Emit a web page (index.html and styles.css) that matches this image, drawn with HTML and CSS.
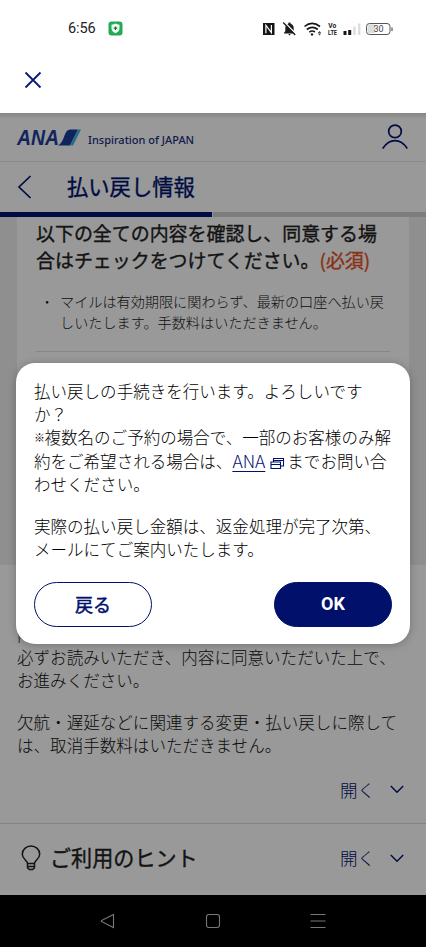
FILE: index.html
```html
<!DOCTYPE html>
<html lang="ja">
<head>
<meta charset="utf-8">
<meta name="viewport" content="width=device-width, initial-scale=1">
<title>払い戻し情報</title>
<link rel="stylesheet" href="styles.css">
</head>
<body>
<div class="phone">
  <div class="status">
    <span class="clock">6:56</span>
    <svg class="shield" width="15" height="15" viewBox="0 0 15 15"><rect x=".5" y=".5" width="14" height="14" rx="3" fill="#27a858"/><path d="M7.500 2.500Q9 3.600 11.500 3.700V7.200Q11.500 10.500 7.500 12.300Q3.500 10.500 3.500 7.200V3.700Q6 3.600 7.500 2.500Z" fill="#e8fff0"/><path d="M7.500 5.500V9M5.800 7.200H9.200" stroke="#17663a" stroke-width="1.200"/></svg>
    <svg class="sysicons" width="134" height="16" viewBox="0 0 134 16">
      <rect x="1" y="2" width="11.500" height="12" fill="#151515"/>
      <path d="M3.900 12.200V4.200L9.400 11.600V3.900" fill="none" stroke="#fff" stroke-width="1.200"/>
      <path d="M27.500 1.500c.8 0 1.200.5 1.200 1.200 2.200.7 3 2.400 3 4.500v3l1.300 1.600v.7H22v-.7l1.300-1.600v-3c0-2.100.8-3.800 3-4.500 0-.7.4-1.200 1.200-1.200ZM26.200 13h2.600l-1.300 1.400Z" fill="#1c1c1c"/>
      <path d="M22.500 1.200l12 12.300" stroke="#fff" stroke-width="1.400"/><path d="M21.200 1.500l12 12.500" stroke="#1c1c1c" stroke-width="1.300"/>
      <path d="M42.500 5.500q7.500-6.200 15.500 0M44.800 8.500q5.500-4.200 11 0M47.300 11.200q3-2.200 5.600-.2" fill="none" stroke="#161616" stroke-width="1.600"/>
      <circle cx="50" cy="13.400" r="1.200" fill="#161616"/><path d="M57.500 10l1.700 2h-3.400ZM57.500 14.500l1.700-2h-3.400Z" fill="#444"/>
      <text x="66.300" y="7" class="volte" textLength="8" lengthAdjust="spacingAndGlyphs">Vo</text><text x="66" y="14" class="volte" textLength="9" lengthAdjust="spacingAndGlyphs">LTE</text>
      <path d="M81.500 10h3v4h-3ZM86.200 9h3v5h-3Z" fill="#161616"/><path d="M91.200 5.500h2.400V14h-2.400ZM96 2.500h2.400V14H96Z" fill="#ddd"/>
      <rect x="105.500" y="3.300" width="8" height="9" rx="2" fill="#ddd"/><rect x="104.500" y="2.500" width="23.500" height="11" rx="3" fill="none" stroke="#555"/><path d="M130 6.500v3.500" stroke="#555" stroke-width="1.200"/>
      <text x="111.500" y="11.200" class="battery">30</text>
    </svg>
  </div>
  <div class="tabbar"><svg width="18" height="18" viewBox="0 0 18 18"><path d="M1.500 1.500l15 15M16.500 1.500l-15 15" stroke="#061b78" stroke-width="1.800"/></svg></div>
  <main class="page">
    <header class="brand">
      <svg class="logo" width="66" height="22" viewBox="0 -2 66 22">
        <text x="1" y="16.300" class="logotext" textLength="42" lengthAdjust="spacingAndGlyphs">ANA</text>
        <path d="M42 16.500q4-2 6.500-10Q50.500 .5 54 .5H62L54 16.500Z" fill="#1c3c9c"/><path d="M62 .5h3L57 16.500H54Z" fill="#3bb4e8"/>
      </svg>
      <span class="slogan">Inspiration of JAPAN</span>
      <svg class="user" width="28" height="28" viewBox="0 0 28 28"><g fill="none" stroke="#00146e" stroke-width="1.700"><circle cx="14" cy="8.400" r="6.300"/><path d="M1.700 25.500Q7 17.700 14 17.700T26.300 25.500"/></g></svg>
    </header>
    <div class="titlebar">
      <svg width="15" height="24" viewBox="0 0 15 24"><path d="M13.500 1L2 12l11.500 11" fill="none" stroke="#00146e" stroke-width="1.700"/></svg>
      <h1>払い戻し情報</h1>
    </div>
    <div class="progress"><i></i></div>
    <section class="grey">
      <div class="card">
        <h2>以下の全ての内容を確認し、同意する場<br>合はチェックをつけてください。<b>(必須)</b></h2>
        <div class="note"><span>・</span><p>マイルは有効期限に関わらず、最新の口座へ払い戻<br>しいたします。手数料はいただきません。</p></div>
        <hr>
      </div>
    </section>
    <section class="terms">
      <p>内<br>必ずお読みいただき、内容に同意いただいた上で、<br>お進みください。</p>
      <p>欠航・遅延などに関連する変更・払い戻しに際して<br>は、取消手数料はいただきません。</p>
      <div class="open"><span>開く</span><svg width="14" height="9" viewBox="0 0 14 9"><path d="M.8 1L7 7.300 13.200 1" fill="none" stroke="#00146e" stroke-width="1.400"/></svg></div>
    </section>
    <section class="hint">
      <svg class="bulb" width="20" height="26" viewBox="0 0 20 26"><g fill="none" stroke="#222" stroke-width="1.500"><path d="M6.500 18.500C6.500 15.500 1.300 14 1.300 9.200a8.700 8.200 0 0 1 17.400 0C18.700 14 13.500 15.500 13.500 18.500ZM6.500 18.500v4.200L8.300 24.500h3.400l1.800-1.800v-4.200M6.500 21.500h7"/></g></svg>
      <h3>ご利用のヒント</h3>
      <div class="open"><span>開く</span><svg width="14" height="9" viewBox="0 0 14 9"><path d="M.8 1L7 7.300 13.200 1" fill="none" stroke="#00146e" stroke-width="1.400"/></svg></div>
    </section>
    <div class="scrim">
      <div class="dialog" role="dialog">
        <p>払い戻しの手続きを行います。よろしいです<br>か？<br><span class="kome">※</span>複数名のご予約の場合で、一部のお客様のみ解<br>約をご希望される場合は、<a>ANA</a><svg class="ext" width="15" height="13" viewBox="0 0 15 13"><path d="M1 5h9.500v6.500H1ZM1 7.500h9.500M3.500 5V1.500H13.500V9H10.500M3.500 3.500h10" fill="none" stroke="#00106b" stroke-width="1.100"/></svg>までお問い合<br>わせください。</p>
        <p>実際の払い戻し金額は、返金処理が完了次第、<br>メールにてご案内いたします。</p>
        <div class="buttons"><button class="back">戻る</button><button class="ok">OK</button></div>
      </div>
    </div>
  </main>
  <nav class="sysnav">
    <svg width="16" height="16" viewBox="0 0 16 16"><path d="M13.500 1.500v13L1.500 8.500v-1Z"/></svg>
    <svg width="16" height="16" viewBox="0 0 16 16"><rect x="1.500" y="1.500" width="13" height="13" rx="2.500"/></svg>
    <svg width="16" height="16" viewBox="0 0 16 16"><path d="M.5 1.500h15M.5 8h15M.5 14.500h15"/></svg>
  </nav>
</div>
</body>
</html>
```
FILE: styles.css
```css
* { box-sizing: border-box; margin: 0; padding: 0; }
body { font-family: "Noto Sans CJK JP", sans-serif; background: #fff; color: #111; }
svg { display: block; flex: none; }
.phone { width: 426px; height: 947px; display: flex; flex-direction: column; overflow: hidden; }
.status { height: 57px; display: flex; align-items: center; padding: 0 30px 0 68px; }
.clock { font: 400 14.500px/20px Roboto, sans-serif; letter-spacing: -.1px; width: 40px; color: #222; padding-top: 1px; }
.sysicons { margin-left: auto; }
.volte { font: 700 6.500px Roboto, sans-serif; fill: #222; }
.battery { font: 400 9px Roboto, sans-serif; fill: #444; }
.tabbar { height: 56px; padding: 14px 24px; }
.page { position: relative; height: 782px; overflow: hidden; background: #fff; }
.brand { height: 49px; display: flex; align-items: flex-start; padding: 16px 17px 0 16px; border-bottom: 1px solid #e9e9e9; }
.logo { margin-top: -2px; overflow: visible; }
.logotext { font: italic 700 21.500px "Liberation Sans", sans-serif; fill: #1c3c9c; }
.slogan { font: 500 11px/16px "Noto Sans", sans-serif; color: #1c3080; margin: 3px 0 0 6px; white-space: nowrap; }
.user { margin: -6px 0 0 auto; }
.titlebar { height: 50px; display: flex; align-items: center; padding-left: 17px; }
h1, h2, h3, h2 b { font-weight: 400; -webkit-text-stroke: .35px currentColor; }
h1 { font-size: 21.300px; line-height: 30px; color: #00146e; margin: -2px 0 0 35px; }
.progress { height: 5px; background: #d1d1d1; }
.progress i { display: block; width: 213px; height: 5px; background: #00146e; border-right: 1px solid #f5f5f5; }
.grey { height: 348px; background: #efefef; padding: 0 17px; }
.card { height: 348px; background: #fff; padding: 3px 19px 0; }
h2 { font-size: 18.950px; line-height: 26.500px; color: #222; white-space: nowrap; }
h2 b { color: #e8501e; }
.note { display: flex; margin-top: 18px; padding-left: 4px; font-size: 14.150px; line-height: 20.500px; font-weight: 300; color: #222; white-space: nowrap; }
.note span { width: 20px; }
hr { border: 0; border-top: 1px solid #e0e0e0; margin-top: 19px; }
.terms { height: 259px; padding: 58px 17px 0; border-bottom: 1px solid #dcdcdc; }
.terms p { font-size: 16.560px; line-height: 23.200px; font-weight: 300; white-space: nowrap; margin-bottom: 18.500px; }
.open { display: flex; align-items: center; gap: 15px; margin-left: auto; width: max-content; font-size: 17.500px; line-height: 24px; font-weight: 300; color: #00146e; }
.terms .open { margin-top: 20px; margin-right: 5px; }
.hint { display: flex; align-items: center; height: 68px; padding: 0 22px 0 21px; }
h3 { font-size: 21.100px; color: #222; margin: -2px 0 0 9px; line-height: 30px; }
.scrim { position: absolute; inset: 0; background: linear-gradient(rgba(0, 0, 0, .12), transparent 6px), rgba(0, 0, 0, .4); display: flex; align-items: flex-start; justify-content: center; padding-top: 250px; }
.dialog { width: 394px; height: 281px; border-radius: 19px; background: #fff; padding: 17px 18px 17px; box-shadow: 0 1px 8px rgba(0, 0, 0, .25); }
.dialog p { font-size: 16.540px; line-height: 23.200px; font-weight: 300; color: #000; white-space: nowrap; margin-bottom: 19px; }
.kome { display: inline-block; font-size: 11px; line-height: 16px; width: 10.500px; vertical-align: 2px; }
.dialog a { font-size: 17.500px; line-height: 20px; color: #00106b; text-decoration: underline; text-underline-offset: 3px; }
.ext { display: inline-block; margin: 0 2px 0 5px; vertical-align: -2px; }
.buttons { display: flex; justify-content: space-between; margin-top: 20.500px; }
button { width: 118px; height: 45px; border-radius: 23px; border: 1px solid #00106b; font: 500 18px/24px "Noto Sans CJK JP", sans-serif; }
.back { background: #fff; color: #00106b; font-weight: 400; -webkit-text-stroke: .5px #00106b; }
.ok { background: #00106b; color: #fff; font: 700 18px/24px Roboto, sans-serif; }
.sysnav { height: 52px; background: #000; display: flex; justify-content: center; align-items: center; gap: 89px; }
.sysnav svg { fill: none; stroke: #777; stroke-width: 1.100; }
```
